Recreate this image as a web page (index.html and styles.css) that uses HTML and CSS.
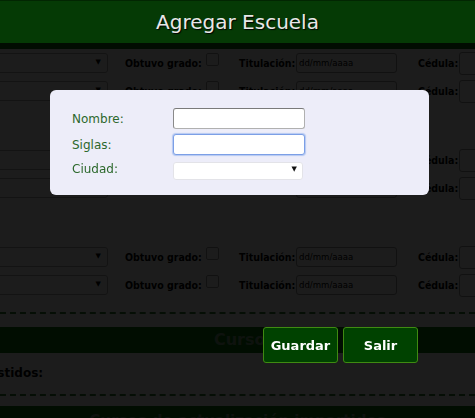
FILE: index.html
```html
<!DOCTYPE html>
<html lang="es">
<head>
<meta charset="utf-8">
<title>Agregar Escuela</title>
<link rel="stylesheet" href="styles.css">
</head>
<body>
<div class="page">
  <div class="page-top"></div>

  <div class="group">
    <div class="row">
      <span class="sel"></span>
      <span class="lbl lbl-grado">Obtuvo grado:</span>
      <span class="chk"></span>
      <span class="lbl lbl-tit">Titulación:</span>
      <span class="date">dd/mm/aaaa</span>
      <span class="lbl lbl-ced">Cédula:</span>
      <span class="ced"></span>
    </div>
    <div class="row">
      <span class="sel"></span>
      <span class="lbl lbl-grado">Obtuvo grado:</span>
      <span class="chk"></span>
      <span class="lbl lbl-tit">Titulación:</span>
      <span class="date">dd/mm/aaaa</span>
      <span class="lbl lbl-ced">Cédula:</span>
      <span class="ced"></span>
    </div>
  </div>

  <div class="group">
    <div class="row">
      <span class="sel"></span>
      <span class="lbl lbl-grado">Obtuvo grado:</span>
      <span class="chk"></span>
      <span class="lbl lbl-tit">Titulación:</span>
      <span class="date">dd/mm/aaaa</span>
      <span class="lbl lbl-ced">Cédula:</span>
      <span class="ced"></span>
    </div>
    <div class="row">
      <span class="sel"></span>
      <span class="lbl lbl-grado">Obtuvo grado:</span>
      <span class="chk"></span>
      <span class="lbl lbl-tit">Titulación:</span>
      <span class="date">dd/mm/aaaa</span>
      <span class="lbl lbl-ced">Cédula:</span>
      <span class="ced"></span>
    </div>
  </div>

  <div class="group">
    <div class="row">
      <span class="sel"></span>
      <span class="lbl lbl-grado">Obtuvo grado:</span>
      <span class="chk"></span>
      <span class="lbl lbl-tit">Titulación:</span>
      <span class="date">dd/mm/aaaa</span>
      <span class="lbl lbl-ced">Cédula:</span>
      <span class="ced"></span>
    </div>
    <div class="row">
      <span class="sel"></span>
      <span class="lbl lbl-grado">Obtuvo grado:</span>
      <span class="chk"></span>
      <span class="lbl lbl-tit">Titulación:</span>
      <span class="date">dd/mm/aaaa</span>
      <span class="lbl lbl-ced">Cédula:</span>
      <span class="ced"></span>
    </div>
  </div>

  <hr class="dash dash-1">
  <div class="section-bar">Cursos</div>
  <div class="asist">Cursos asistidos:</div>
  <hr class="dash dash-2">
  <div class="section-bar section-bar-2">Cursos de actualización impartidos</div>
</div>

<div class="overlay">
  <header class="dlg-title">Agregar Escuela</header>
  <form class="dlg-box">
    <label class="dlg-lbl" for="nombre">Nombre:</label>
    <input class="dlg-input" id="nombre" type="text">
    <label class="dlg-lbl" for="siglas">Siglas:</label>
    <input class="dlg-input is-focus" id="siglas" type="text">
    <label class="dlg-lbl" for="ciudad">Ciudad:</label>
    <span class="dlg-select"><select id="ciudad"><option></option></select></span>
  </form>
  <div class="dlg-actions">
    <button class="btn" type="button">Guardar</button>
    <button class="btn btn-salir" type="button">Salir</button>
  </div>
</div>
</body>
</html>
```
FILE: styles.css
```css
html, body {
  margin: 0;
  padding: 0;
  height: 100%;
  overflow: hidden;
}
body {
  background: #fff;
  font-family: "DejaVu Sans", Verdana, sans-serif;
  color: #000;
}

/* ---------- underlying page ---------- */
.page {
  display: flex;
  flex-direction: column;
}
.page-top {
  height: 49px;
  background: #0b6b0b;
}
.group {
  display: flex;
  flex-direction: column;
  margin-bottom: 41px;
}
.group:nth-of-type(4) { margin-bottom: 13px; }
.row {
  display: flex;
  align-items: center;
  height: 28px;
  margin-left: -60px;
  white-space: nowrap;
}
.sel {
  width: 166px;
  height: 18px;
  border: 1px solid #aaa;
  border-radius: 3px;
  flex-shrink: 0;
  position: relative;
}
.sel::after {
  content: "▼";
  position: absolute;
  right: 6px;
  top: 4px;
  font-size: 7px;
}
.lbl {
  font-family: "DejaVu Sans Condensed", "DejaVu Sans", sans-serif;
  font-weight: bold;
  font-size: 10.5px;
  color: #000;
  flex-shrink: 0;
}
.lbl-grado { margin-left: 17px; width: 76px; }
.chk {
  width: 11px;
  height: 11px;
  border: 1px solid #999;
  border-radius: 2px;
  margin-left: 5px;
  align-self: flex-start;
  margin-top: 4px;
  flex-shrink: 0;
}
.lbl-tit { margin-left: 20px; width: 57px; }
.date {
  width: 97px;
  height: 18px;
  border: 1px solid #999;
  border-radius: 3px;
  padding-left: 2px;
  font-family: "DejaVu Sans Condensed", sans-serif;
  font-size: 9.5px;
  line-height: 18px;
  color: #000;
  flex-shrink: 0;
}
.lbl-ced { margin-left: 21px; width: 41px; }
.ced {
  width: 100px;
  height: 21px;
  border: 1px solid #999;
  border-radius: 3px;
  flex-shrink: 0;
}
.dash {
  margin: 0;
  border: 0;
  border-top: 2px dashed #2e7d32;
  height: 0;
}
.section-bar {
  margin-top: 13px;
  height: 26px;
  padding-left: 14px;
  background: #0a7a0a;
  color: #7fa67f;
  font-weight: bold;
  font-size: 16px;
  line-height: 26px;
  text-align: center;
}
.asist {
  margin-top: 10px;
  margin-left: -72px;
  height: 20px;
  line-height: 20px;
  font-weight: bold;
  font-size: 12px;
  color: #000;
}
.dash-2 { margin-top: 11px; }
.section-bar-2 {
  margin-top: 10px;
  height: 30px;
  padding-left: 0;
  line-height: 31px;
  font-size: 15px;
}

/* ---------- modal overlay ---------- */
.overlay {
  position: fixed;
  inset: 0;
  background: rgba(0, 0, 0, 0.89);
  display: flex;
  flex-direction: column;
  align-items: flex-start;
}
.dlg-title {
  align-self: stretch;
  height: 43px;
  background: #053a05;
  border-top: 1px solid #022602;
  box-sizing: border-box;
  color: #e8e8e8;
  font-size: 20px;
  line-height: 42px;
  text-align: center;
  text-shadow: 1px 1px 1px #000;
}
.dlg-box {
  margin: 47px 0 0 50px;
  width: 379px;
  height: 105px;
  box-sizing: border-box;
  padding: 18px 0 0 22px;
  background: #ededf9;
  border-radius: 6px;
  display: grid;
  grid-template-columns: 101px 132px;
  grid-template-rows: 21px 21px 18px;
  row-gap: 5px;
  align-items: center;
}
.dlg-lbl {
  font-size: 12px;
  color: #2c682c;
}
.dlg-input {
  box-sizing: border-box;
  width: 132px;
  height: 21px;
  margin: 0;
  padding: 0 3px;
  background: #fff;
  border: 1px solid #b0b0b0;
  border-top-color: #7a7a7a;
  border-left-color: #8a8a8a;
  border-radius: 3px;
  outline: none;
}
.dlg-input.is-focus {
  border: 1px solid #7c9fe6;
  box-shadow: 0 0 1px 1px #b4c8f2;
}
.dlg-select {
  position: relative;
  display: block;
  width: 130px;
  height: 18px;
}
.dlg-select select {
  appearance: none;
  -webkit-appearance: none;
  box-sizing: border-box;
  width: 130px;
  height: 18px;
  margin: 0;
  background: #fff;
  border: 1px solid #e3e3e8;
  border-radius: 3px;
  outline: none;
}
.dlg-select::after {
  content: "▼";
  position: absolute;
  right: 6px;
  top: 5px;
  font-size: 7px;
  color: #111;
  pointer-events: none;
}
.dlg-actions {
  margin: 132px 0 0 263px;
  display: flex;
  gap: 5px;
}
.btn {
  width: 75px;
  height: 36px;
  margin: 0;
  padding: 0;
  background: #004200;
  border: 1px solid #3f8a12;
  border-radius: 3px;
  color: #fff;
  font-family: "DejaVu Sans", sans-serif;
  font-weight: bold;
  font-size: 13px;
  cursor: pointer;
}
```
